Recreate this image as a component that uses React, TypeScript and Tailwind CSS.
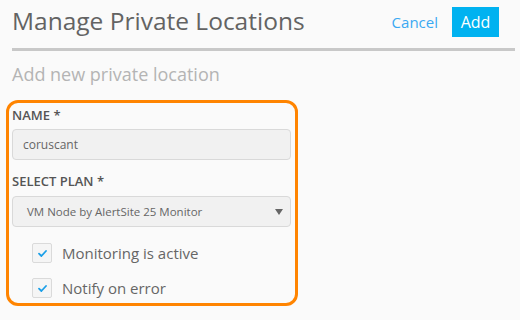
function Check() {
  return (
    <span className="flex h-[20px] w-[20px] items-center justify-center rounded-[2px] border border-[#dadada] bg-[#f5f5f5]">
      <svg width="9" height="7" viewBox="0 0 9 7" fill="none">
        <path d="M1 3.6 L3.4 6 L8 1" stroke="#1a9fe8" strokeWidth="1.8" strokeLinecap="round" strokeLinejoin="round" />
      </svg>
    </span>
  );
}

export default function App() {
  return (
    <div className="h-[320px] w-[520px] overflow-hidden bg-[#fafafa] pl-[6px] font-['Open_Sans',sans-serif]">
      {/* Header */}
      <div className="ml-[6px] mr-[5px] flex h-[51px] items-start justify-between border-b-[3px] border-[#c8c8c8] pr-[16px]">
        <h1 className="mt-[6px] text-[24.5px] leading-[30px] text-[#636363]">Manage Private Locations</h1>
        <div className="mt-[7px] flex items-center gap-[14px]">
          <button className="text-[15px] leading-[30px] text-[#3aa9f2]">Cancel</button>
          <button className="h-[30px] w-[47px] bg-[#00b2f0] text-[16px] text-white">Add</button>
        </div>
      </div>

      <p className="ml-[6px] mt-[11px] text-[18px] leading-[24px] text-[#b4b4b4]">Add new private location</p>

      {/* Form */}
      <div className="mt-[14px] h-[206px] w-[292px] rounded-[12px] border-[3px] border-[#ff8400] pl-[3px] pr-[4px] pt-[3px]">
        <label className="block text-[13px] font-semibold leading-[18px] text-[#555]">NAME *</label>
        <div className="mt-[5px] flex h-[31px] items-center rounded-[4px] border border-[#d9d9d9] bg-[#f1f1f1] px-[10px] text-[12px] text-[#666]">
          coruscant
        </div>

        <label className="mt-[12px] block text-[13px] font-semibold leading-[18px] text-[#555]">SELECT PLAN *</label>
        <div className="mt-[6px] flex h-[31px] items-center justify-between rounded-[4px] border border-[#d9d9d9] bg-[#f1f1f1] pl-[14px] pr-[6px] text-[11.5px] text-[#666]">
          <span>VM Node by AlertSite 25 Monitor</span>
          <svg width="8" height="6" viewBox="0 0 8 6" className="mr-[1px]">
            <path d="M0 0 H8 L4 6 Z" fill="#666" />
          </svg>
        </div>

        <div className="mt-[16px] flex flex-col gap-[15px] pl-[20px]">
          <div className="flex items-center gap-[10px]">
            <Check />
            <span className="text-[15px] leading-[20px] text-[#666]">Monitoring is active</span>
          </div>
          <div className="flex items-center gap-[10px]">
            <Check />
            <span className="text-[15px] leading-[20px] text-[#666]">Notify on error</span>
          </div>
        </div>
      </div>
    </div>
  );
}
